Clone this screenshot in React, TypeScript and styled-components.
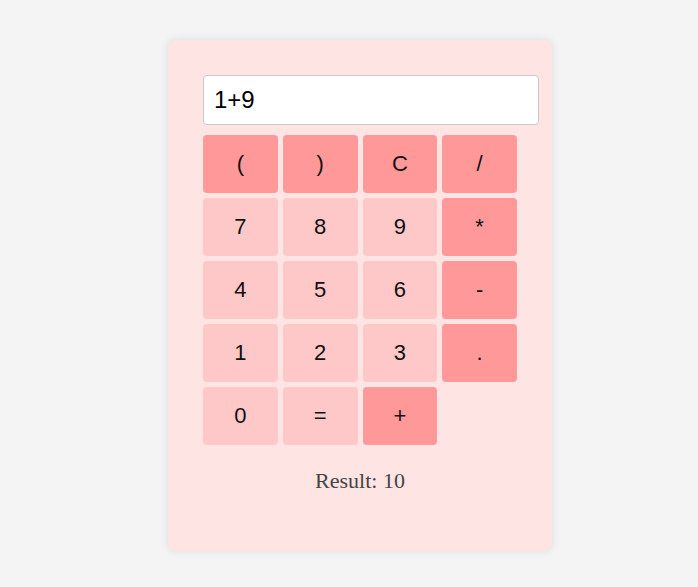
import React, { useState } from "react";
import styled, { createGlobalStyle } from "styled-components";

const Global = createGlobalStyle`
  html, body { margin: 0; padding: 0; background: #f4f4f4; }
  body { font-family: "Liberation Serif", "Times New Roman", serif; }
`;

const Page = styled.div`
  padding: 40px 0 36px 168px;
`;

const Card = styled.div`
  width: 314px;
  height: 441px;
  padding: 35px;
  background: #ffe4e4;
  border-radius: 8px;
  box-shadow: 0 0 10px rgba(0, 0, 0, 0.1);
`;

const Display = styled.input`
  display: block;
  width: 100%;
  height: 28px;
  padding: 10px;
  border: 1px solid #cfc6c6;
  border-radius: 4px;
  background: #fff;
  font-family: "Liberation Sans", Arial, sans-serif;
  font-size: 24px;
  color: #000;
  outline: none;
`;

const Keys = styled.div`
  display: grid;
  grid-template-columns: repeat(4, 1fr);
  gap: 5px;
  margin-top: 10px;
`;

const Key = styled.button<{ $op?: boolean }>`
  height: 58px;
  border: none;
  border-radius: 4px;
  background: ${(p) => (p.$op ? "#ff9999" : "#ffc8c8")};
  font-family: "Liberation Sans", Arial, sans-serif;
  font-size: 22px;
  color: #111;
  padding: 0;
  cursor: pointer;
`;

const Result = styled.p`
  margin: 23px 0 0;
  text-align: center;
  font-size: 22px;
  color: #444;
`;

const keys: { label: string; op?: boolean }[] = [
  { label: "(", op: true },
  { label: ")", op: true },
  { label: "C", op: true },
  { label: "/", op: true },
  { label: "7" },
  { label: "8" },
  { label: "9" },
  { label: "*", op: true },
  { label: "4" },
  { label: "5" },
  { label: "6" },
  { label: "-", op: true },
  { label: "1" },
  { label: "2" },
  { label: "3" },
  { label: ".", op: true },
  { label: "0" },
  { label: "=" },
  { label: "+", op: true },
];

export default function App() {
  const [expr, setExpr] = useState("1+9");
  return (
    <Page>
      <Global />
      <Card>
        <Display value={expr} onChange={(e) => setExpr(e.target.value)} />
        <Keys>
          {keys.map((k) => (
            <Key key={k.label} $op={k.op}>
              {k.label}
            </Key>
          ))}
        </Keys>
        <Result>Result: 10</Result>
      </Card>
    </Page>
  );
}
